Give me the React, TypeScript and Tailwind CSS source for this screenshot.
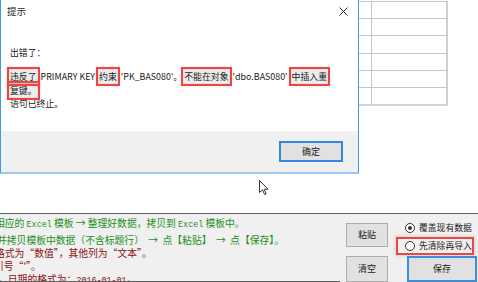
import React from "react";

const R = ({ children }: { children: React.ReactNode }) => (
  <span className="mx-[2px] bg-[#ececec] outline-2 outline-[#ee4444] outline-offset-[1px] shadow-[0_0_3px_3px_rgba(0,0,0,0.12)]">
    {children}
  </span>
);

const M = ({ children }: { children: React.ReactNode }) => (
  <span className="font-['Liberation_Mono'] text-[8.4px]">{children}</span>
);

export default function App() {
  return (
    <div className="w-[478px] h-[282px] bg-white relative overflow-hidden flex flex-col font-['Noto_Sans_CJK_SC',sans-serif] text-[#1a1a1a]">
      {/* top area */}
      <div className="h-[213px] flex shrink-0">
        {/* dialog */}
        <div className="w-[359px] h-[174px] border-l border-r border-[#3f9ae8] border-b-2 border-b-[#9fc8ec] flex flex-col shrink-0">
          <div className="h-[24px] flex items-center justify-between pl-[6px] pr-[10px] bg-white">
            <span className="text-[9.5px] leading-none">提示</span>
            <svg width="9" height="9" viewBox="0 0 9 9" className="mt-[-1px]">
              <path d="M0.5 0.5 L8.5 8.5 M8.5 0.5 L0.5 8.5" stroke="#222" strokeWidth="1" />
            </svg>
          </div>
          <div className="flex-1 bg-white pl-[7px] pt-[22px] text-[8.9px]">
            <div className="leading-[13px] pl-[2px]">出错了：</div>
            <div className="mt-[11px] leading-[13.5px]">
              <div className="whitespace-nowrap">
                <R>违反了</R> PRIMARY KEY <R>约束</R> 'PK_BAS080'。<R>不能在对象</R> 'dbo.BAS080' <R>中插入重</R>
              </div>
              <div>
                <R>复键。</R>
              </div>
              <div className="pl-[2px]">语句已终止。</div>
            </div>
          </div>
          <div className="h-[41px] bg-[#f0f0f0] flex items-center justify-end pr-[15px]">
            <div className="w-[64px] h-[21px] border-2 border-[#3389e0] bg-[#e1e1e1] flex items-center justify-center text-[9px]">
              确定
            </div>
          </div>
        </div>
        {/* spreadsheet grid */}
        <div className="mt-[1px] flex flex-col w-[89px] h-[105px] border-b-2 border-[#d4d4d4]">
          {[0, 1, 2, 3, 4, 5].map((i) => (
            <div key={i} className="flex h-[17.2px] border-t border-[#c6c6c6]">
              <div className="w-[13px] border-r border-[#c6c6c6]" />
              <div className="w-[76px] border-r-2 border-[#d0d0d0]" />
            </div>
          ))}
        </div>
      </div>

      {/* bottom panel */}
      <div className="flex-1 border-t border-[#606060] bg-[#f0f0f0] flex">
        <div className="w-[340px] h-[68px] shrink-0 border-b border-[#606060] overflow-hidden pt-[3px] text-[9.8px] leading-[13px] whitespace-nowrap">
          <div className="ml-[-5px] text-[#1d8f1d] mb-[2px]">
            相应的 <M>Excel</M> 模板 → 整理好数据，拷贝到 <M>Excel</M> 模板中。
          </div>
          <div className="ml-[-3px] text-[#1d8f1d]">
            并拷贝模板中数据（不含标题行） &nbsp;→ &nbsp;点【粘贴】 &nbsp;→ &nbsp;点【保存】。
          </div>
          <div className="ml-[-5px] text-[#8a1010]">格式为“数值”，其他列为“文本”。</div>
          <div className="ml-[-6px] text-[#8a1010]">引号“'”。</div>
          <div className="ml-[-2px] text-[#8a1010]">
            ，日期的格式为：<M>2016-01-01</M>。
          </div>
        </div>
        <div className="ml-[6px] flex flex-col pt-[9px] gap-[9px] shrink-0">
          <div className="w-[42px] h-[24px] bg-[#e1e1e1] border border-[#adadad] flex items-center justify-center text-[9px]">
            粘贴
          </div>
          <div className="w-[42px] h-[26px] bg-[#e1e1e1] border border-[#adadad] flex items-center justify-center text-[9px]">
            清空
          </div>
        </div>
        <div className="ml-[10px] flex flex-col pt-[7px] text-[8.8px] whitespace-nowrap shrink-0">
          <div className="flex items-center h-[14px] pl-[7px] gap-[4px]">
            <span className="w-[10px] h-[10px] rounded-full border border-[#333] flex items-center justify-center bg-white shrink-0">
              <span className="w-[4px] h-[4px] rounded-full bg-[#333]" />
            </span>
            <span>覆盖现有数据</span>
          </div>
          <div className="mt-[4px] flex items-center h-[14px] w-[74px] pl-[7px] gap-[4px] outline-2 outline-[#ee4444] shadow-[0_0_3px_3px_rgba(0,0,0,0.12)] overflow-hidden">
            <span className="w-[10px] h-[10px] rounded-full border border-[#333] bg-white shrink-0" />
            <span>先清除再导入</span>
          </div>
          <div className="mt-[3px] ml-[9px] w-[70px] h-[26px] bg-[#e1e1e1] border-2 border-[#3a8ee0] flex items-center justify-center text-[9px]">
            保存
          </div>
        </div>
      </div>

      {/* mouse cursor */}
      <svg className="absolute left-[259px] top-[180px]" width="10" height="16" viewBox="0 0 10 16">
        <path d="M0.5 0.5 L0.5 12.5 L3.5 9.8 L5.6 14.5 L7.2 13.8 L5.2 9.2 L9 9.2 Z" fill="white" stroke="#333" strokeWidth="1" />
      </svg>
    </div>
  );
}
